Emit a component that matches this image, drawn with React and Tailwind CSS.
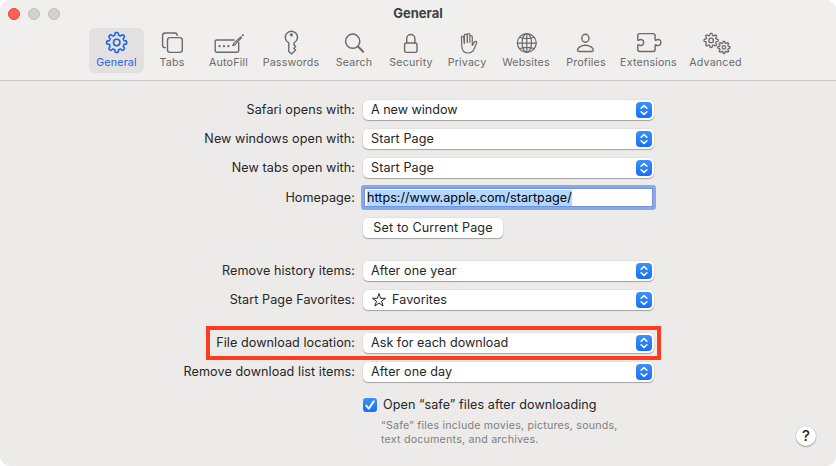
import React from "react";

// Closed outline of a cog wheel with softly squared teeth.
function gearPath(cx, cy, radius, depth, teeth) {
  const points = [];
  const steps = 240;
  for (let i = 0; i < steps; i++) {
    const a = (i / steps) * Math.PI * 2;
    const wave = Math.tanh(2.2 * Math.cos(teeth * a)) / Math.tanh(2.2);
    const r = radius - depth / 2 + (depth / 2) * wave;
    points.push(`${(cx + r * Math.sin(a)).toFixed(2)} ${(cy - r * Math.cos(a)).toFixed(2)}`);
  }
  return `M${points.join("L")}Z`;
}

function Icon({ x, children }) {
  return (
    <svg
      width="36"
      height="28"
      viewBox={`${x} 29 36 28`}
      fill="none"
      stroke="currentColor"
      strokeWidth="1.4"
      strokeLinecap="round"
      strokeLinejoin="round"
      className="shrink-0"
    >
      {children}
    </svg>
  );
}

const tabs = [
  {
    name: "General",
    box: "w-[55px] bg-[#e2e1e0] text-[#1f63e6]",
    x: 98.5,
    art: (
      <>
        <path d={gearPath(116.2, 42.5, 10, 2.6, 8)} strokeWidth="1.6" />
        <circle cx="116.2" cy="42.5" r="3.2" strokeWidth="1.6" />
      </>
    ),
  },
  {
    name: "Tabs",
    box: "w-[56px]",
    x: 154,
    art: (
      <>
        <path d="M165.2 47.6H165a2.4 2.4 0 0 1-2.4-2.4V35.6a2.6 2.6 0 0 1 2.6-2.6h9.6a2.4 2.4 0 0 1 2.4 2.4" />
        <rect x="167.5" y="37.6" width="14.8" height="14.8" rx="2.6" />
      </>
    ),
  },
  {
    name: "AutoFill",
    box: "w-[57px]",
    x: 210.5,
    art: (
      <>
        <path d="M233.5 40h-17.2a1.6 1.6 0 0 0-1.6 1.6v9a1.6 1.6 0 0 0 1.6 1.6h20.3a1.6 1.6 0 0 0 1.6-1.6v-7.8" />
        <path d="M232.2 45.6l1.2-2.4 6.8-6.3M232.2 45.6l2.5-1 6.3-6.9" strokeWidth="1.2" />
        <path d="M242.2 35.3l.3-.3" strokeWidth="1.8" />
        <path d="M219 46.2h.1M223.4 46.2h.1M227.8 46.2h.1" strokeWidth="2.2" />
      </>
    ),
  },
  {
    name: "Passwords",
    box: "w-[68px]",
    x: 273,
    art: (
      <>
        <path d="M288.8 42.8a6.1 6.1 0 1 1 5.2 0v2l1.6 1.7-1.7 1.9 1.7 1.7-1.5 1.5-2.6 2.4-2.7-2.4z" />
        <circle cx="291.4" cy="34.8" r="1.6" fill="currentColor" stroke="none" />
      </>
    ),
  },
  {
    name: "Search",
    box: "w-[58px]",
    x: 336,
    art: (
      <>
        <circle cx="352.7" cy="41.2" r="7.1" strokeWidth="1.5" />
        <path d="M358 46.5l5.2 5.2" strokeWidth="2" />
      </>
    ),
  },
  {
    name: "Security",
    box: "w-[56px]",
    x: 393,
    art: (
      <>
        <rect x="404.6" y="43" width="12.4" height="9.4" rx="1.4" />
        <path d="M406.7 43v-4.4a4.1 4.1 0 0 1 8.2 0V43" />
      </>
    ),
  },
  {
    name: "Privacy",
    box: "w-[56px]",
    x: 449,
    art: (
      <path
        strokeWidth="1.2"
        d="M464.2 43.6V43l-.5-5.6c-.2-1.8-2.3-1.7-2.2.1l.2 8.4c.2 4.6 2.7 7.1 6.6 7.1 3.3 0 5-1.8 6.2-4.7l2.1-5.6c.5-1.4-1.4-2-2.2-.8l-2 3.5-.1 0V37c0-1.8-2.4-1.8-2.4 0v5.4M469.9 42.4V35c0-1.8-2.5-1.8-2.5 0v7.4M467.4 42.4V34.6M467.2 42V35.4c0-1.8-2.8-1.8-2.8 0v7.8"
      />
    ),
  },
  {
    name: "Websites",
    box: "w-[62px]",
    x: 508,
    art: (
      <g strokeWidth="1.25">
        <circle cx="526.8" cy="43" r="9.4" />
        <ellipse cx="526.8" cy="43" rx="4.7" ry="9.4" />
        <path d="M526.8 33.6v18.8M517.4 43h18.8M519.6 37.3c4 1.8 10.4 1.8 14.4 0M519.6 48.7c4-1.8 10.4-1.8 14.4 0" />
      </g>
    ),
  },
  {
    name: "Profiles",
    box: "w-[58px]",
    x: 568,
    art: (
      <>
        <ellipse cx="585.4" cy="38.2" rx="3.6" ry="4" />
        <path d="M577.5 50.2c0-2.4 3.4-4.9 7.9-4.9s7.9 2.5 7.9 4.9c0 .9-.6 1.3-1.5 1.3H579c-.9 0-1.5-.4-1.5-1.3z" />
      </>
    ),
  },
  {
    name: "Extensions",
    box: "w-[67px]",
    x: 630.5,
    art: (
      <path d="M639.2 33.6h13.5a1.9 1.9 0 0 1 1.9 1.9v4.3c0 .5.5.7.9.4 1.9-1.6 4.9-.5 4.9 2.3s-3 4-4.9 2.4c-.4-.3-.9-.1-.9.4v4.3a1.9 1.9 0 0 1-1.9 1.9h-13.5a1.9 1.9 0 0 1-1.9-1.9v-4.3c0-.6.5-.8 1-.5 1.9 1.5 4.9.5 4.9-2.3s-3-3.8-4.9-2.3c-.5.3-1 .1-1-.4v-4.3a1.9 1.9 0 0 1 1.9-1.9z" />
    ),
  },
  {
    name: "Advanced",
    box: "w-[67px]",
    x: 697.5,
    art: (
      <>
        <path d={gearPath(710.6, 40.4, 7.1, 1.9, 8)} strokeWidth="1.3" />
        <circle cx="710.6" cy="40.4" r="2.3" strokeWidth="1.3" />
        <path d={gearPath(723.4, 47.4, 6.1, 1.7, 8)} strokeWidth="1.3" />
        <circle cx="723.4" cy="47.4" r="1.7" strokeWidth="1.3" />
      </>
    ),
  },
];

function Row({ label, children, className = "" }) {
  return (
    <div className={`relative flex items-center ${className}`}>
      <div className="w-[355px] shrink-0 text-right leading-5">{label}</div>
      <div className="ml-2 flex">{children}</div>
    </div>
  );
}

function Popup({ children }) {
  return (
    <div className="flex h-5 w-[291px] items-center justify-between rounded-[5px] bg-white pr-0.5 pl-2 shadow-[0_0_0_0.5px_rgba(0,0,0,0.08),0_1px_1px_rgba(0,0,0,0.28)]">
      <span className="flex items-center leading-5">{children}</span>
      <span className="flex size-4 items-center justify-center rounded-[4px] bg-linear-to-b from-[#3a92fb] to-[#1b6ef4]">
        <svg width="16" height="16" viewBox="0 0 16 16" fill="none" stroke="white" strokeWidth="1.5" strokeLinecap="round" strokeLinejoin="round">
          <path d="M5.1 6.2L8 3.6l2.9 2.6M5.1 9.8L8 12.4l2.9-2.6" />
        </svg>
      </span>
    </div>
  );
}

export default function App() {
  return (
    <div className="h-[466px] w-[836px] bg-white font-['Inter','Liberation_Sans',sans-serif] text-[12.6px] leading-5 tracking-[0.08px] whitespace-nowrap text-[#262626]">
      <div className="flex h-full flex-col overflow-hidden rounded-[10px] bg-[#ecebea]">
        <header className="h-[81px] shrink-0 border-b border-[#c6c5c4] bg-[#f0efed]">
          <div className="flex h-7 items-center">
            <div className="flex w-[100px] gap-2 pl-2">
              <span className="size-3 rounded-full border border-[#e0463d] bg-[#fe5f57]" />
              <span className="size-3 rounded-full border border-[#bdbcbb] bg-[#d3d2d1]" />
              <span className="size-3 rounded-full border border-[#bdbcbb] bg-[#d3d2d1]" />
            </div>
            <h1 className="w-[636px] pb-0.5 text-center text-[13px] font-bold tracking-normal text-[#404040]">General</h1>
          </div>
          <nav className="flex pl-[89px] text-[#6b6a69]">
            {tabs.map((tab) => (
              <div key={tab.name} className={`flex h-[45px] flex-col items-center rounded-md pt-px ${tab.box}`}>
                <Icon x={tab.x}>{tab.art}</Icon>
                <span className="-mt-px text-[10.65px] leading-[14px] tracking-[0.2px]">{tab.name}</span>
              </div>
            ))}
          </nav>
        </header>

        <main className="relative flex-1 pt-[19px]">
          <Row label="Safari opens with:">
            <Popup><span className="tracking-[-0.02px]">A new window</span></Popup>
          </Row>
          <Row label="New windows open with:" className="mt-[9px]">
            <Popup>Start Page</Popup>
          </Row>
          <Row label="New tabs open with:" className="mt-[9px]">
            <Popup>Start Page</Popup>
          </Row>
          <Row label="Homepage:" className="mt-[7px]">
            <div className="-ml-0.5 flex h-[25px] w-[295px] items-center rounded-[3px] border-3 border-[#87a8ec] bg-white pl-[3px] text-black shadow-[inset_0_0_0_1px_#7193df]">
              <span className="h-4 bg-[#b3d7ff] leading-[15px] tracking-[0.01px]">https://www.apple.com/startpage/</span>
            </div>
          </Row>
          <Row label="" className="mt-2">
            <button className="h-5 w-[140px] rounded-[5px] bg-white text-center leading-5 tracking-[0.13px] shadow-[0_0_0_0.5px_rgba(0,0,0,0.08),0_1px_1px_rgba(0,0,0,0.28)]">
              Set to Current Page
            </button>
          </Row>
          <Row label="Remove history items:" className="mt-[23px]">
            <Popup>After one year</Popup>
          </Row>
          <Row label="Start Page Favorites:" className="mt-[9px]">
            <Popup>
              <svg width="16" height="16" viewBox="0 0 16 16" fill="none" stroke="currentColor" strokeLinejoin="round" className="-mt-px mr-[5px]">
                <path d="M8 1.5l1.6 4.8h5L10.5 9.2l1.6 4.8L8 11.1 3.9 14l1.6-4.8-4.1-2.9h5z" />
              </svg>
              Favorites
            </Popup>
          </Row>
          <Row label="File download location:" className="mt-[23px]">
            <Popup><span className="tracking-[0.02px]">Ask for each download</span></Popup>
            <div className="absolute -top-[7px] left-[206px] h-[34px] w-[455px] border-4 border-[#ff3c1f]" />
          </Row>
          <Row label="Remove download list items:" className="mt-[9px]">
            <Popup>After one day</Popup>
          </Row>
          <Row label="" className="mt-[13px]">
            <div className="flex items-center gap-1.5">
              <span className="-mt-px flex size-3.5 items-center justify-center rounded-[3px] bg-linear-to-b from-[#3a92fb] to-[#1b6ef4]">
                <svg width="14" height="14" viewBox="0 0 14 14" fill="none" stroke="white" strokeWidth="1.9" strokeLinecap="round" strokeLinejoin="round">
                  <path d="M3.2 7.6l2.6 3L10.7 3.4" />
                </svg>
              </span>
              <span>Open “safe” files after downloading</span>
            </div>
          </Row>
          <p className="mt-1 ml-[381px] text-[10.65px] leading-[14px] tracking-[0.22px] text-[#808080]">
            “Safe” files include movies, pictures, sounds,
            <br />
            text documents, and archives.
          </p>
          <button className="absolute top-[345px] left-[796px] flex size-5 items-center justify-center rounded-full bg-white text-[15px] font-medium shadow-[0_0_0_0.5px_rgba(0,0,0,0.1),0_1px_1.5px_rgba(0,0,0,0.3)]">
            ?
          </button>
        </main>
      </div>
    </div>
  );
}
